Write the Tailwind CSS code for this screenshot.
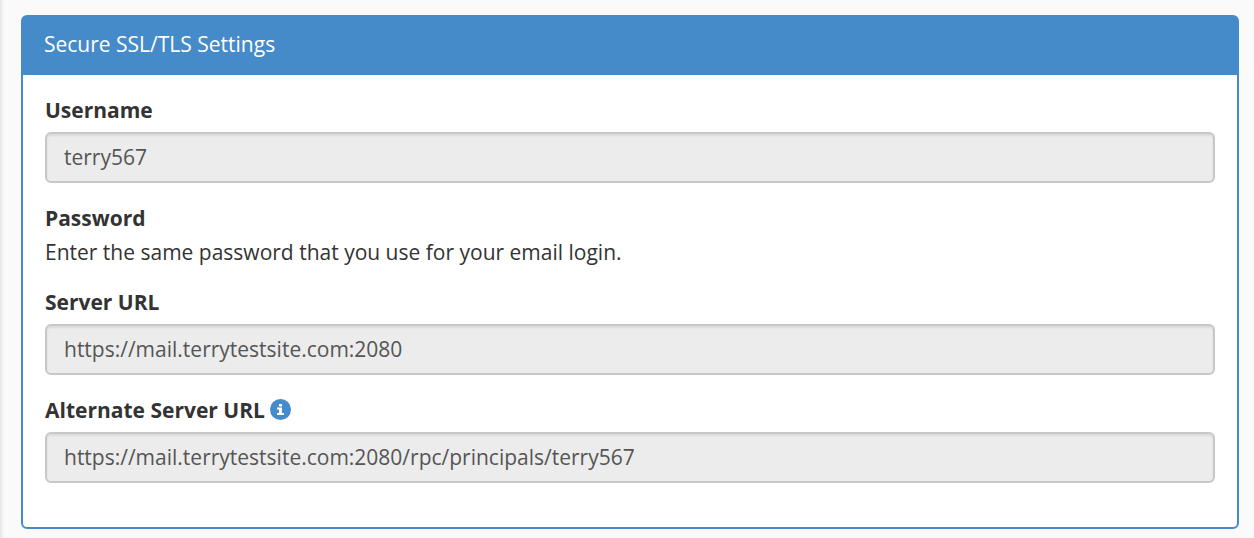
<!DOCTYPE html>
<html lang="en">
<head>
    <meta charset="UTF-8">
    <meta name="viewport" content="width=device-width, initial-scale=1.0">
    <script src="https://cdn.jsdelivr.net/npm/@tailwindcss/browser@4"></script>
    <title>Secure SSL/TLS Settings</title>
</head>
<body class="bg-[#fafafa] font-['Open_Sans',sans-serif] text-[21px] leading-[30px] text-[#333]">
    <div class="min-h-screen px-[21px] pt-[15px] pb-[9px] pr-[15px] shadow-[inset_4px_0_4px_-3px_rgba(0,0,0,0.12)]">
        <section class="rounded-md border-2 border-[#458ac9] bg-white">
            <h2 class="bg-[#458ac9] px-[21px] pt-3 pb-4 text-white">Secure SSL/TLS Settings</h2>
            <form class="px-[22px] pt-5 pb-11">
                <div class="mb-5">
                    <label for="username" class="mb-[7px] block font-bold">Username</label>
                    <input id="username" type="text" readonly value="terry567" class="block h-[51px] w-full rounded-md border-2 border-[#c8c8c8] bg-[#ececec] px-[17px] pb-0.5 text-[#555] shadow-[inset_0_2px_2px_rgba(0,0,0,0.075)]">
                </div>
                <div class="mb-5">
                    <h3 class="mb-1 font-bold">Password</h3>
                    <p>Enter the same password that you use for your email login.</p>
                </div>
                <div class="mb-5">
                    <label for="server" class="mb-[7px] block font-bold">Server URL</label>
                    <input id="server" type="text" readonly value="https://mail.terrytestsite.com:2080" class="block h-[51px] w-full rounded-md border-2 border-[#c8c8c8] bg-[#ececec] px-[17px] pb-0.5 text-[#555] shadow-[inset_0_2px_2px_rgba(0,0,0,0.075)]">
                </div>
                <div>
                    <div class="mb-[7px] flex items-center gap-[5px]">
                        <label for="alternate" class="font-bold">Alternate Server URL</label>
                        <button type="button" aria-label="More information" class="pb-0.5">
                            <svg class="block size-[21px]" viewBox="0 0 21 21">
                                <circle cx="10.5" cy="10.5" r="10.5" fill="#458ac9"/>
                                <path d="M9 5h3v2.500H9zM7 8.500h5V14h2v2H7v-2h2v-3.500H7z" fill="#fff"/>
                            </svg>
                        </button>
                    </div>
                    <input id="alternate" type="text" readonly value="https://mail.terrytestsite.com:2080/rpc/principals/terry567" class="block h-[51px] w-full rounded-md border-2 border-[#c8c8c8] bg-[#ececec] px-[17px] pb-0.5 text-[#555] shadow-[inset_0_2px_2px_rgba(0,0,0,0.075)]">
                </div>
            </form>
        </section>
    </div>
</body>
</html>
